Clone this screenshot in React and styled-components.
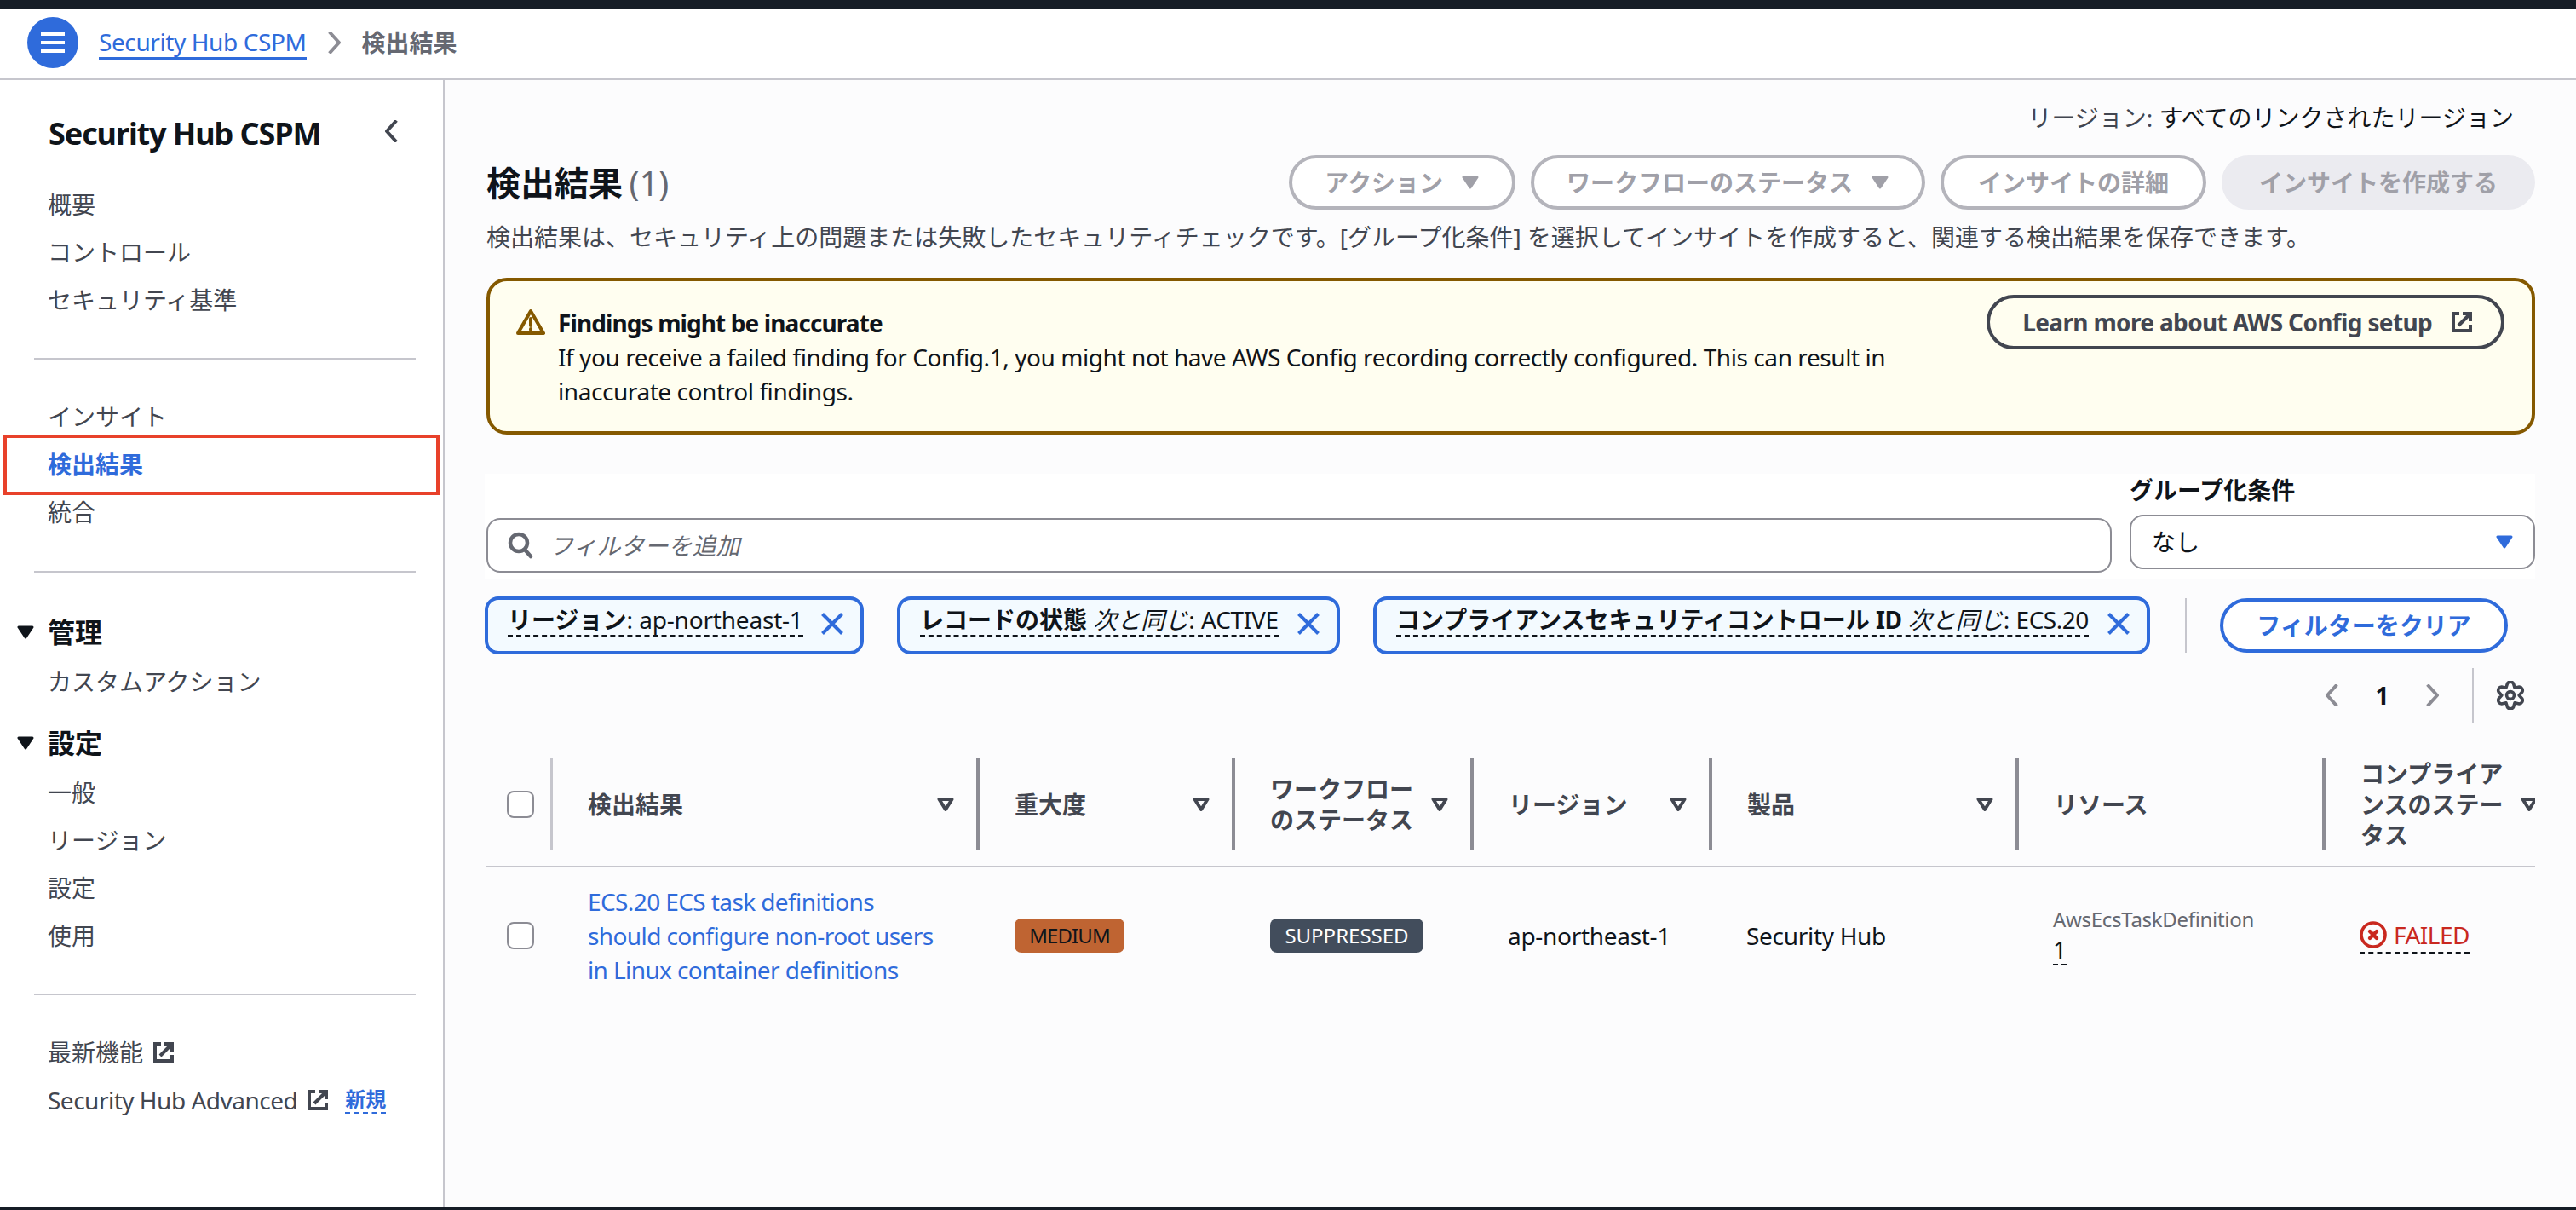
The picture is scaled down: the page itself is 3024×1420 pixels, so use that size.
import React from 'react'
import styled, { createGlobalStyle } from 'styled-components'

const GlobalStyle = createGlobalStyle`
  html, body {
    margin: 0;
    padding: 0;
    overflow: hidden;
    background: #fff;
  }
  * { box-sizing: border-box; }
  body {
    font-family: "Noto Sans", "Noto Sans CJK JP", sans-serif;
    font-size: 28px;
    line-height: 40px;
    color: #0f141a;
  }
`

const Page = styled.div`
  width: 3024px;
  height: 1420px;
  display: flex;
  flex-direction: column;
  overflow: hidden;
`
const TopBar = styled.div`
  height: 10px;
  background: #161d26;
  flex: none;
`
const BottomBar = styled.div`
  height: 3px;
  background: #161d26;
  flex: none;
`
const Header = styled.header`
  height: 84px;
  flex: none;
  display: flex;
  align-items: center;
  padding: 0 0 2px 32px;
  background: #fff;
  border-bottom: 2px solid #c6c6cd;
`
const MenuButton = styled.div`
  width: 60px;
  height: 60px;
  border-radius: 50%;
  background: #2f6bdb;
  display: flex;
  align-items: center;
  justify-content: center;
  margin-right: 24px;
`
const Latin = styled.span`
  letter-spacing: ${p => p.$spacing ?? -0.5}px;
`
const Crumb = styled.a`
  color: #2f6bdb;
  line-height: 36px;
  letter-spacing: -0.4px;
  border-bottom: 3px solid #2f6bdb;
`
const CrumbCurrent = styled.span`
  color: #656871;
  font-weight: 700;
`
const CrumbSep = styled.span`
  display: flex;
  margin: 0 24px 0 25px;
  color: #8c8c94;
`
const Body = styled.div`
  flex: 1;
  display: flex;
  min-height: 0;
`

/* sidebar */
const Sidebar = styled.nav`
  width: 522px;
  flex: none;
  background: #fff;
  border-right: 2px solid #c6c6cd;
`
const SideHead = styled.div`
  height: 118px;
  padding: 40px 53px 0 57px;
  display: flex;
  justify-content: space-between;
  align-items: flex-start;
`
const SideTitle = styled.div`
  font-size: 36px;
  font-weight: 700;
  line-height: 46px;
  letter-spacing: -1.1px;
`
const SideClose = styled.span`
  display: flex;
  color: #424650;
  padding-top: 7px;
`
const SideList = styled.div`
  display: flex;
  flex-direction: column;
`
const NavItem = styled.a`
  position: relative;
  display: flex;
  align-items: center;
  gap: 12px;
  height: 56px;
  padding-left: 56px;
  color: ${p => (p.$active ? '#2f6bdb' : '#424650')};
  font-weight: ${p => (p.$active ? 700 : 400)};
`
const RedBox = styled.span`
  position: absolute;
  left: 4px;
  top: -7px;
  width: 512px;
  height: 71px;
  border: 4px solid #e8412a;
`
const NavDivider = styled.div`
  height: 2px;
  margin: ${p => p.$top}px 32px ${p => p.$bottom}px 40px;
  background: #c6c6cd;
`
const NavSection = styled.div`
  display: flex;
  align-items: center;
  height: 60px;
  margin-top: ${p => p.$top || 0}px;
  padding-left: 20px;
  gap: 16px;
  font-size: 32px;
  font-weight: 700;
`
const NewTag = styled.span`
  color: #2f6bdb;
  font-weight: 700;
  font-size: 24px;
  line-height: 30px;
  margin-left: 8px;
  border-bottom: 2px dashed #2f6bdb;
`

/* main */
const Main = styled.main`
  flex: 1;
  min-width: 0;
  padding: 24px 48px 0 49px;
  background: #fcfcfd;
`
const RegionRow = styled.div`
  text-align: right;
  padding-right: 25px;
  color: #424650;
`
const RegionValue = styled.span`
  color: #0f141a;
`
const TitleRow = styled.div`
  margin-top: 24px;
  height: 64px;
  display: flex;
  align-items: center;
  justify-content: space-between;
`
const Title = styled.h1`
  margin: 0;
  font-size: 40px;
  line-height: 48px;
  font-weight: 700;
  padding-top: 1px;
`
const Count = styled.span`
  color: #656871;
  font-weight: 400;
  margin-left: -3px;
`
const Actions = styled.div`
  display: flex;
  gap: 18px;
`
const GhostButton = styled.button`
  height: 64px;
  padding: 0 ${p => (p.$caret ? 38 : 40)}px;
  display: flex;
  align-items: center;
  gap: 21px;
  border-radius: 40px;
  border: 4px solid ${p => (p.$filled ? '#ebebf0' : '#b4b4bb')};
  background: ${p => (p.$filled ? '#ebebf0' : '#fff')};
  color: #a0a0a8;
  font: inherit;
  font-weight: 700;
`
const Description = styled.p`
  margin: 12px 0 0;
  color: #424650;
  white-space: nowrap;
`
const Alert = styled.div`
  margin-top: 28px;
  height: 184px;
  padding: 29px 32px 0 31px;
  display: flex;
  border: 4px solid #855900;
  border-radius: 24px;
  background: #fffef0;
`
const AlertIcon = styled.span`
  display: flex;
  width: 49px;
  flex: none;
  padding-top: 3px;
  color: #855900;
`
const AlertText = styled.div`
  width: 1620px;
  letter-spacing: -0.43px;
`
const AlertTitle = styled.div`
  font-weight: 700;
  letter-spacing: -0.9px;
`
const AlertAction = styled.a`
  height: 64px;
  margin-top: -13px;
  margin-left: auto;
  padding: 0 34px 0 38px;
  display: flex;
  align-items: center;
  gap: 23px;
  border: 4px solid #424650;
  border-radius: 40px;
  color: #424650;
  font-weight: 700;
  letter-spacing: -0.65px;
  white-space: nowrap;
`
const FilterBlock = styled.div`
  margin: 46px 0 0 -2px;
  height: 123px;
  padding-left: 2px;
  display: flex;
  gap: 21px;
  background: #fff;
`
const FilterInput = styled.div`
  flex: 1;
  height: 64px;
  margin-top: 52px;
  padding-left: 22px;
  display: flex;
  align-items: center;
  gap: 18px;
  border: 2px solid #8c8c94;
  border-radius: 16px;
  color: #656871;
  font-style: italic;
`
const GroupBy = styled.div`
  width: 476px;
  flex: none;
`
const GroupLabel = styled.div`
  font-weight: 700;
  height: 48px;
  padding-top: 0;
  line-height: 38px;
`
const Select = styled.div`
  height: 64px;
  padding: 0 24px;
  display: flex;
  align-items: center;
  justify-content: space-between;
  border: 2px solid #8c8c94;
  border-radius: 16px;
  color: #0f141a;
`
const SelectCaret = styled.span`
  display: flex;
  color: #2f6bdb;
`
const TokenRow = styled.div`
  margin: 21px 0 0 -2px;
  display: flex;
  align-items: flex-start;
`
const Token = styled.div`
  width: ${p => p.$width}px;
  margin-right: 39px;
  height: 68px;
  padding: 0 20px 0 23px;
  display: flex;
  align-items: flex-start;
  justify-content: space-between;
  border: 4px solid #2f6bdb;
  border-radius: 16px;
  background: #f3faff;
  color: #2f6bdb;
`
const TokenText = styled.span`
  margin-top: 5px;
  height: 38px;
  line-height: 36px;
  color: #0f141a;
  white-space: nowrap;
  border-bottom: 2px dashed #0f141a;
`
const TokenClose = styled.span`
  display: flex;
  margin-top: 15px;
`
const TokenDivider = styled.div`
  width: 2px;
  height: 64px;
  margin: 2px 39px 0 2px;
  background: #c6c6cd;
`
const ClearButton = styled.button`
  width: 338px;
  height: 64px;
  margin-top: 2px;
  border: 4px solid #2f6bdb;
  border-radius: 40px;
  background: #fff;
  color: #2f6bdb;
  font: inherit;
  font-weight: 700;
`
const PagerRow = styled.div`
  margin-top: 16px;
  height: 64px;
  display: flex;
  align-items: center;
  justify-content: flex-end;
`
const PagerArrow = styled.span`
  display: flex;
  color: #8c8c94;
`
const PagerNumber = styled.span`
  width: 103px;
  text-align: center;
  font-weight: 700;
`
const PagerDivider = styled.div`
  width: 2px;
  height: 64px;
  margin: 0 26px 0 38px;
  background: #c6c6cd;
`
const PagerGear = styled.span`
  display: flex;
  margin-right: 12px;
  color: #424650;
`

/* table */
const columns = '75px 500px 300px 280px 280px 360px 360px 250px'

const HeadRow = styled.div`
  margin-top: 42px;
  display: grid;
  grid-template-columns: ${columns};
  padding-bottom: 18px;
  border-bottom: 2px solid #c6c6cd;
`
const CheckCell = styled.div`
  display: flex;
  align-items: center;
  padding-left: 24px;
`
const Checkbox = styled.span`
  width: 32px;
  height: 32px;
  border: 2px solid #8c8c94;
  border-radius: 8px;
  background: #fff;
`
const HeadCell = styled.div`
  height: 108px;
  padding: 0 ${p => (p.$last ? 0 : 26)}px 0 41px;
  display: flex;
  align-items: center;
  justify-content: space-between;
  overflow: hidden;
  line-height: 36px;
  font-weight: 700;
  color: #424650;
  border-left: ${p => (p.$light ? '3px solid #c6c6cd' : '4px solid #8c8c94')};
`
const SortIcon = styled.span`
  display: flex;
  flex: none;
  margin-right: ${p => (p.$last ? -3 : 0)}px;
`
const BodyRow = styled.div`
  display: grid;
  grid-template-columns: ${columns};
  height: 160px;
`
const Cell = styled.div`
  display: flex;
  flex-direction: column;
  justify-content: center;
  align-items: flex-start;
  padding-left: 44px;
  letter-spacing: -0.3px;
`
const FindingLink = styled.a`
  color: #2f6bdb;
  white-space: nowrap;
  letter-spacing: -0.6px;
`
const Badge = styled.span`
  width: ${p => p.$width}px;
  height: 40px;
  margin-left: 1px;
  display: flex;
  align-items: center;
  justify-content: center;
  border-radius: 8px;
  font-size: 24px;
  letter-spacing: ${p => p.$spacing}px;
  background: ${p => p.$bg};
  color: ${p => p.$fg};
`
const ResourceType = styled.div`
  font-size: 24px;
  line-height: 32px;
  letter-spacing: -0.3px;
  color: #656871;
`
const ResourceCount = styled.div`
  line-height: 34px;
  margin-top: 2px;
  border-bottom: 2px dashed #0f141a;
`
const FailedStatus = styled.div`
  display: flex;
  align-items: center;
  gap: 8px;
  color: #c9281f;
  line-height: 40px;
  letter-spacing: -0.5px;
  border-bottom: 2px dashed #0f141a;
`

const Stroke = styled.svg`
  fill: none;
  stroke: currentColor;
  stroke-linecap: ${p => p.$cap || 'round'};
  stroke-linejoin: round;
  display: block;
`

const ChevronLeft = ({ w = 16, h = 26 }) => (
  <Stroke width={w} height={h} viewBox="0 0 16 26" strokeWidth="4" $cap="square">
    <path d="M13 2 3 13l10 11" />
  </Stroke>
)
const ChevronRight = ({ w = 16, h = 26 }) => (
  <Stroke width={w} height={h} viewBox="0 0 16 26" strokeWidth="4" $cap="square">
    <path d="M3 2l10 11L3 24" />
  </Stroke>
)
const External = () => (
  <Stroke width="24" height="24" viewBox="0 0 24 24" strokeWidth="4" $cap="butt">
    <path d="M9 2H2v20h20v-7" strokeLinejoin="miter" />
    <path d="M8 16 21 3" />
    <path d="M13 2h9v9" strokeLinejoin="miter" />
  </Stroke>
)
const CaretFilled = ({ w = 20, h = 16 }) => (
  <svg width={w} height={h} viewBox="0 0 20 16" style={{ display: 'block' }}>
    <path d="M2 2h16l-8 12z" fill="currentColor" stroke="currentColor" strokeWidth="3" strokeLinejoin="round" />
  </svg>
)
const CaretOutline = () => (
  <Stroke width="20" height="18" viewBox="0 0 20 18" strokeWidth="4">
    <path d="M2.5 3h15L10 15z" />
  </Stroke>
)
const Warning = () => (
  <Stroke width="34" height="32" viewBox="0 0 34 32" strokeWidth="4">
    <path d="M17 3 32 29H2z" />
    <path d="M17 12v8M17 24v1" />
  </Stroke>
)
const Search = () => (
  <Stroke width="32" height="32" viewBox="0 0 32 32" strokeWidth="4.5">
    <circle cx="14" cy="13" r="10" />
    <path d="M21 21l7 8" />
  </Stroke>
)
const Close = () => (
  <Stroke width="26" height="26" viewBox="0 0 26 26" strokeWidth="4" $cap="butt">
    <path d="M1.5 1.5l23 23M24.5 1.5l-23 23" />
  </Stroke>
)
const FailedIcon = () => (
  <Stroke width="32" height="32" viewBox="0 0 32 32" strokeWidth="3.6">
    <circle cx="16" cy="16" r="14" />
    <path d="M12 12l8 8M20 12l-8 8" strokeWidth="4.4" />
  </Stroke>
)
const MenuLines = () => (
  <svg width="28" height="24" viewBox="0 0 28 24" style={{ display: 'block' }}>
    <path d="M0 2h28M0 12h28M0 22h28" stroke="#fff" strokeWidth="4" />
  </svg>
)

// six rounded lobes, top lobe pointing up
const polar = (r, deg) => {
  const a = (deg * Math.PI) / 180
  return `${(17 + r * Math.cos(a)).toFixed(2)} ${(17 + r * Math.sin(a)).toFixed(2)}`
}
const gearOutline = [-90, -30, 30, 90, 150, 210]
  .map((a, i) => `${i === 0 ? 'M' : 'L'}${polar(10.2, a - 30)} L${polar(14.4, a - 14)} A4.2 4.2 0 0 1 ${polar(14.4, a + 14)}`)
  .join(' ') + ' Z'

const Gear = () => (
  <Stroke width="34" height="34" viewBox="0 0 34 34" strokeWidth="3.6">
    <path d={gearOutline} />
    <circle cx="17" cy="17" r="4.4" />
  </Stroke>
)

const App = () => {
  const sortable = [
    ['検出結果'],
    ['重大度'],
    ['ワークフロー', 'のステータス'],
    ['リージョン'],
    ['製品'],
  ]
  return (
    <Page>
      <GlobalStyle />
      <TopBar />
      <Header>
        <MenuButton><MenuLines /></MenuButton>
        <Crumb>Security Hub CSPM</Crumb>
        <CrumbSep><ChevronRight /></CrumbSep>
        <CrumbCurrent>検出結果</CrumbCurrent>
      </Header>
      <Body>
        <Sidebar>
          <SideHead>
            <SideTitle>Security Hub CSPM</SideTitle>
            <SideClose><ChevronLeft /></SideClose>
          </SideHead>
          <SideList>
            <NavItem>概要</NavItem>
            <NavItem>コントロール</NavItem>
            <NavItem>セキュリティ基準</NavItem>
          </SideList>
          <NavDivider $top={40} $bottom={39} />
          <SideList>
            <NavItem>インサイト</NavItem>
            <NavItem $active>検出結果<RedBox /></NavItem>
            <NavItem>統合</NavItem>
          </SideList>
          <NavDivider $top={41} $bottom={40} />
          <SideList>
            <NavSection><CaretFilled />管理</NavSection>
            <NavItem>カスタムアクション</NavItem>
            <NavSection $top={14}><CaretFilled />設定</NavSection>
            <NavItem>一般</NavItem>
            <NavItem>リージョン</NavItem>
            <NavItem>設定</NavItem>
            <NavItem>使用</NavItem>
          </SideList>
          <NavDivider $top={40} $bottom={39} />
          <SideList>
            <NavItem>最新機能<External /></NavItem>
            <NavItem><Latin>Security Hub Advanced</Latin><External /><NewTag>新規</NewTag></NavItem>
          </SideList>
        </Sidebar>
        <Main>
          <RegionRow>リージョン: <RegionValue>すべてのリンクされたリージョン</RegionValue></RegionRow>
          <TitleRow>
            <Title>検出結果 <Count>(1)</Count></Title>
            <Actions>
              <GhostButton $caret>アクション<CaretFilled w={22} h={16} /></GhostButton>
              <GhostButton $caret>ワークフローのステータス<CaretFilled w={22} h={16} /></GhostButton>
              <GhostButton>インサイトの詳細</GhostButton>
              <GhostButton $filled>インサイトを作成する</GhostButton>
            </Actions>
          </TitleRow>
          <Description>検出結果は、セキュリティ上の問題または失敗したセキュリティチェックです。[グループ化条件] を選択してインサイトを作成すると、関連する検出結果を保存できます。</Description>
          <Alert>
            <AlertIcon><Warning /></AlertIcon>
            <AlertText>
              <AlertTitle>Findings might be inaccurate</AlertTitle>
              If you receive a failed finding for Config.1, you might not have AWS Config recording correctly configured. This can result in inaccurate control findings.
            </AlertText>
            <AlertAction>Learn more about AWS Config setup<External /></AlertAction>
          </Alert>
          <FilterBlock>
            <FilterInput><Search />フィルターを追加</FilterInput>
            <GroupBy>
              <GroupLabel>グループ化条件</GroupLabel>
              <Select>なし<SelectCaret><CaretFilled /></SelectCaret></Select>
            </GroupBy>
          </FilterBlock>
          <TokenRow>
            <Token $width={445}>
              <TokenText><b>リージョン</b>: <Latin $spacing={-0.2}>ap-northeast-1</Latin></TokenText>
              <TokenClose><Close /></TokenClose>
            </Token>
            <Token $width={520}>
              <TokenText><b>レコードの状態</b> <i>次と同じ</i>: <Latin $spacing={-0.3}>ACTIVE</Latin></TokenText>
              <TokenClose><Close /></TokenClose>
            </Token>
            <Token $width={912}>
              <TokenText><b>コンプライアンスセキュリティコントロール <Latin>ID</Latin></b> <i>次と同じ</i>: <Latin>ECS.20</Latin></TokenText>
              <TokenClose><Close /></TokenClose>
            </Token>
            <TokenDivider />
            <ClearButton>フィルターをクリア</ClearButton>
          </TokenRow>
          <PagerRow>
            <PagerArrow><ChevronLeft /></PagerArrow>
            <PagerNumber>1</PagerNumber>
            <PagerArrow><ChevronRight /></PagerArrow>
            <PagerDivider />
            <PagerGear><Gear /></PagerGear>
          </PagerRow>
          <HeadRow>
            <CheckCell><Checkbox /></CheckCell>
            {sortable.map((lines, i) => (
              <HeadCell key={lines[0]} $light={i === 0}>
                <span>{lines.map((l, j) => <React.Fragment key={l}>{j > 0 && <br />}{l}</React.Fragment>)}</span>
                <SortIcon><CaretOutline /></SortIcon>
              </HeadCell>
            ))}
            <HeadCell><span>リソース</span></HeadCell>
            <HeadCell $last>
              <span>コンプライア<br />ンスのステー<br />タス</span>
              <SortIcon $last><CaretOutline /></SortIcon>
            </HeadCell>
          </HeadRow>
          <BodyRow>
            <CheckCell><Checkbox /></CheckCell>
            <Cell>
              <FindingLink>ECS.20 ECS task definitions<br />should configure non-root users<br />in Linux container definitions</FindingLink>
            </Cell>
            <Cell><Badge $width={129} $spacing={-0.9} $bg="#bf6432" $fg="#0f141a">MEDIUM</Badge></Cell>
            <Cell><Badge $width={180} $spacing={0} $bg="#424d5c" $fg="#fff">SUPPRESSED</Badge></Cell>
            <Cell>ap-northeast-1</Cell>
            <Cell>Security Hub</Cell>
            <Cell>
              <ResourceType>AwsEcsTaskDefinition</ResourceType>
              <ResourceCount>1</ResourceCount>
            </Cell>
            <Cell><FailedStatus><FailedIcon />FAILED</FailedStatus></Cell>
          </BodyRow>
        </Main>
      </Body>
      <BottomBar />
    </Page>
  )
}

export default App
